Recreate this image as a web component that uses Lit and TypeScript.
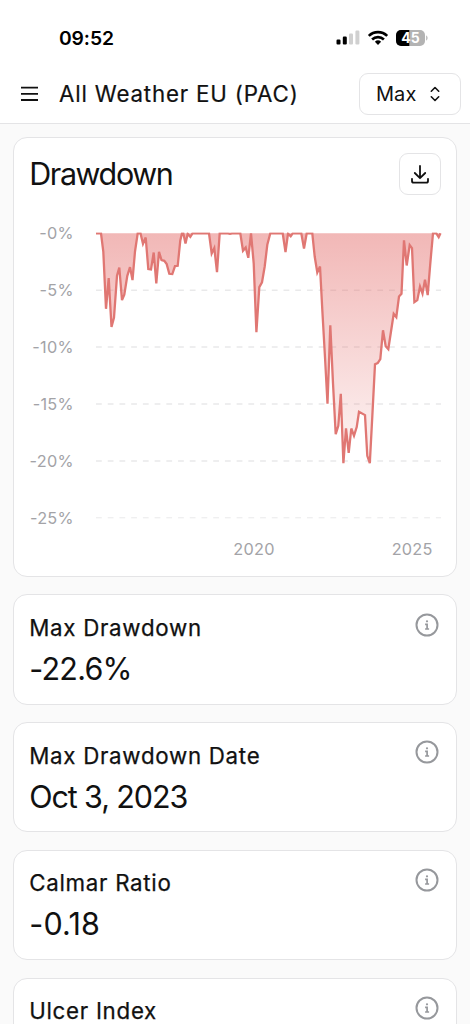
import { LitElement, html, css, svg, nothing } from 'lit';
import { customElement, property } from 'lit/decorators.js';

type Metric = {
  label: string;
  value: string;
  tracking: number;
};

const METRICS: Metric[] = [
  { label: 'Max Drawdown', value: '-22.6%', tracking: -0.75 },
  { label: 'Max Drawdown Date', value: 'Oct 3, 2023', tracking: -1.1 },
  { label: 'Calmar Ratio', value: '-0.18', tracking: 0.2 },
  { label: 'Ulcer Index', value: '-7.42', tracking: 0 },
];

// y grows downwards from the zero line, x from the start of the plot
const SERIES: [number, number][] = [
  [0, 0], [5, 0], [7.3, 18.2], [10, 75.5], [12.7, 44.8], [15.5, 93.6], [18, 84.2], [21, 42.5],
  [23.3, 34.2], [26, 66.8], [28.3, 61.5], [31.3, 42.5], [34, 33.8], [36.5, 46.8], [39, 18.2], [41.7, 0],
  [44.5, 0], [47, 10.5], [49.7, 4.2], [52.3, 35.8], [55, 36.2], [57.7, 19.2], [60.3, 50.2], [63, 18.5],
  [65.5, 26.8], [68.3, 27.5], [70.7, 30.8], [73.3, 40.5], [76.3, 40.8], [79, 32.8], [81.7, 32.5],
  [84.3, 7.2], [86, 0], [87.3, 0], [89.5, 10.2], [91.7, 0.5], [94.3, 3.5], [96.5, 0], [113, 0],
  [115.7, 20.2], [118.3, 14.8], [121, 38.8], [123.7, 0], [132, 0], [134, 0.6], [136, 0], [144.3, 0],
  [147, 17.5], [149.7, 14.2], [152.3, 24.5], [155, 0], [157.7, 30], [160.4, 98.8], [163.3, 53.8],
  [166, 49], [168.7, 33.2], [171.3, 11.5], [174.3, 0], [186.7, 0], [189.5, 18.8], [192, 0.3],
  [194.7, 3], [196.7, 0], [205.3, 0], [208, 15.2], [210.7, 0], [216.3, 0], [218.7, 23.2],
  [221.3, 39.2], [224, 33.2], [226.3, 76.5], [229, 124], [231.5, 170.5], [234.3, 92], [237, 150],
  [239.7, 200.8], [242.3, 192.5], [244.8, 160.5], [247.4, 229.8], [250, 195], [252.7, 219.5],
  [255.3, 195.2], [258, 202.5], [260.7, 193.8], [263, 178.5], [269, 181.8], [271.3, 222.5],
  [273.8, 229.8], [276.3, 183.2], [279, 131], [281.7, 129.8], [284.3, 125.8], [287, 97],
  [289.7, 113], [292.3, 115.8], [295, 98.2], [297.7, 80.5], [300.3, 83.8], [303, 63.2],
  [305.5, 60.5], [308, 7], [310.7, 32.2], [313.7, 11.8], [316, 14.8], [318.4, 68.8], [321.3, 66.8],
  [324, 53.2], [326.5, 60.2], [329, 46.5], [331.7, 61.8], [334.3, 30], [337, 0], [340.3, 0],
  [342.7, 3.8], [344.5, 0],
];

const STEP = 56.9;

@customElement('info-icon')
export class InfoIcon extends LitElement {
  static styles = css`
    :host {
      display: block;
      width: 24px;
      height: 24px;
    }

    svg {
      display: block;
    }
  `;

  render() {
    return html`
      <svg width="24" height="24" viewBox="0 0 24 24" fill="none" stroke="#96989c">
        <circle cx="12" cy="12" r="10.5" stroke-width="2" />
        <path d="M10.1 11.3h2v4.7M10.1 16h4" stroke-width="1.7" />
        <circle cx="12" cy="8.3" r="1.1" fill="#96989c" stroke="none" />
      </svg>
    `;
  }
}

@customElement('metric-card')
export class MetricCard extends LitElement {
  static styles = css`
    :host {
      box-sizing: border-box;
      display: flex;
      justify-content: space-between;
      align-items: flex-start;
      height: 110.3px;
      padding: 16.6px 17.2px 0 15px;
      border: 1px solid #e4e4e6;
      border-radius: 14px;
      background: #fff;
    }

    .label {
      font-size: 22.3px;
      line-height: 32px;
      -webkit-text-stroke: 0.25px #111;
      letter-spacing: 0.72px;
      white-space: nowrap;
    }

    .value {
      margin-top: 5px;
      font-size: 30.5px;
      line-height: 40px;
      white-space: nowrap;
    }

    info-icon {
      margin-top: 0.7px;
    }
  `;

  @property({ type: Object })
  metric!: Metric;

  render() {
    return html`
      <div>
        <div class="label">${this.metric.label}</div>
        <div class="value" style="letter-spacing: ${this.metric.tracking}px">${this.metric.value}</div>
      </div>
      <info-icon></info-icon>
    `;
  }
}

@customElement('drawdown-chart')
export class DrawdownChart extends LitElement {
  static styles = css`
    :host {
      display: block;
    }

    svg {
      display: block;
    }

    .grid {
      stroke: #e9e9ea;
      stroke-width: 1.5;
      stroke-dasharray: 5.8 5.92;
    }

    .grid.last {
      stroke-width: 1;
    }

    .tick {
      font-size: 16.3px;
      letter-spacing: 0.25px;
      fill: #a3a3a7;
    }

    .line {
      fill: none;
      stroke: #e07773;
      stroke-width: 2.3;
    }
  `;

  render() {
    const points = SERIES.map(([x, y]) => `${x},${y}`).join(' ');
    return html`
      <svg width="414" height="346" viewBox="-67 -14.3 414 346">
        <defs>
          <linearGradient id="fade" gradientUnits="userSpaceOnUse" x1="0" y1="0" x2="0" y2="230">
            <stop offset="0" stop-color="#e4706e" stop-opacity="0.5" />
            <stop offset="1" stop-color="#e4706e" stop-opacity="0.07" />
          </linearGradient>
          <clipPath id="plot"><rect x="0" y="-0.9" width="346" height="290" /></clipPath>
        </defs>
        ${[0, 1, 2, 3, 4, 5].map(i => svg`
          ${i > 0 ? svg`<line class="grid ${i === 5 ? 'last' : ''}" x1="0" x2="345" y1=${i * STEP} y2=${i * STEP} />` : nothing}
          <text class="tick" text-anchor="end" x="-22.3" y=${i * STEP + 5.9}>-${i * 5}%</text>
        `)}
        <g clip-path="url(#plot)">
          <polygon points=${points} fill="url(#fade)" />
          <polyline class="line" points=${points} />
        </g>
        <text class="tick" text-anchor="middle" x="158" y="322.2">2020</text>
        <text class="tick" text-anchor="middle" x="316.2" y="322.2">2025</text>
      </svg>
    `;
  }
}

@customElement('app-root')
export class AppRoot extends LitElement {
  static styles = css`
    :host {
      display: block;
      height: 1024px;
      overflow: hidden;
      background: #fafafa;
      color: #111;
      font-family: Inter, 'Liberation Sans', sans-serif;
    }

    .top {
      box-sizing: border-box;
      height: 124px;
      background: #fff;
      border-bottom: 1px solid #e4e4e6;
    }

    .status {
      display: flex;
      justify-content: space-between;
      align-items: center;
      height: 64px;
      padding: 12px 42px 0 59px;
      box-sizing: border-box;
    }

    .time {
      color: #000;
      font-size: 19.3px;
      font-weight: 600;
      letter-spacing: -0.1px;
    }

    .battery-text {
      font-size: 14px;
      font-weight: 700;
      fill: #fff;
    }

    .bar {
      display: flex;
      align-items: center;
      height: 60px;
      padding: 0 8.6px 0 20px;
    }

    .title {
      flex: 1;
      margin-left: 20px;
      padding-bottom: 2px;
      font-size: 22.3px;
      -webkit-text-stroke: 0.2px #111;
      letter-spacing: 0.82px;
      white-space: nowrap;
    }

    .select {
      box-sizing: border-box;
      display: flex;
      align-items: center;
      justify-content: space-between;
      width: 102.5px;
      height: 42px;
      padding: 0 20px 0 16px;
      border: 1px solid #e4e4e6;
      border-radius: 9px;
      font-size: 20px;
      letter-spacing: 0.1px;
    }

    .content {
      display: flex;
      flex-direction: column;
      gap: 17.4px;
      padding: 13.4px 13.2px 0;
    }

    .chart-card {
      box-sizing: border-box;
      height: 439.7px;
      padding: 15px 15px 0 15px;
      border: 1px solid #e4e4e6;
      border-radius: 14px;
      background: #fff;
    }

    .chart-head {
      display: flex;
      justify-content: space-between;
      align-items: center;
      height: 42px;
      margin-bottom: 24px;
    }

    .chart-title {
      font-size: 30.5px;
      line-height: 40px;
      letter-spacing: -1.4px;
    }

    .download {
      box-sizing: border-box;
      display: grid;
      place-items: center;
      width: 42px;
      height: 42px;
      border: 1px solid #e4e4e6;
      border-radius: 9px;
    }
  `;

  private renderStatus() {
    return html`
      <div class="status">
        <span class="time">09:52</span>
        <svg width="92" height="18" viewBox="0 -1 92 18">
          <rect x="0.5" y="9.6" width="4" height="5" rx="1.1" />
          <rect x="6.8" y="6.6" width="4" height="8" rx="1.1" />
          <rect x="13" y="3.6" width="4" height="11" rx="1.1" fill="#d0d0d0" />
          <rect x="19.4" y="0.6" width="4" height="14" rx="1.1" fill="#d0d0d0" />
          <g fill="none" stroke="#000" stroke-width="2.6">
            <path d="M32.8 5.9a13.2 13.2 0 0 1 18.4 0" />
            <path d="M36.1 9.5a8.4 8.4 0 0 1 11.8 0" />
          </g>
          <path d="M38.9 11.8a4.5 4.5 0 0 1 6.2 0L42 15z" />
          <clipPath id="cell"><rect x="60" y="0" width="29" height="16" rx="5" /></clipPath>
          <g clip-path="url(#cell)">
            <rect x="60" y="0" width="29" height="16" fill="#b3b3b3" />
            <rect x="60" y="0" width="13.3" height="16" />
          </g>
          <path d="M90.2 5.5c1.8.6 1.8 4.4 0 5z" fill="#b3b3b3" />
          <text class="battery-text" x="74.5" y="13.1" text-anchor="middle">45</text>
        </svg>
      </div>
    `;
  }

  render() {
    return html`
      <header class="top">
        ${this.renderStatus()}
        <div class="bar">
          <svg width="19" height="16" viewBox="0 0 19 16" stroke="#111" stroke-width="1.8">
            <path d="M1 1.6h17M1 7.8h17M1 14h17" />
          </svg>
          <div class="title">All Weather EU (PAC)</div>
          <div class="select">
            <span>Max</span>
            <svg width="10" height="16" viewBox="0 0 10 16" fill="none" stroke="#111" stroke-width="1.6" stroke-linecap="round" stroke-linejoin="round">
              <path d="M1.3 5.2 5 1.5l3.7 3.7M1.3 10.8 5 14.5l3.7-3.7" />
            </svg>
          </div>
        </div>
      </header>
      <main class="content">
        <section class="chart-card">
          <div class="chart-head">
            <div class="chart-title">Drawdown</div>
            <div class="download">
              <svg width="18" height="19" viewBox="0 0 18 19" fill="none" stroke="#111" stroke-width="1.8" stroke-linecap="round" stroke-linejoin="round">
                <path d="M9 1v12M3.8 8 9 13.2 14.2 8M1 13.8v2.2q0 1.7 1.7 1.7h12.6q1.7 0 1.7-1.7v-2.2" />
              </svg>
            </div>
          </div>
          <drawdown-chart></drawdown-chart>
        </section>
        ${METRICS.map(metric => html`<metric-card .metric=${metric}></metric-card>`)}
      </main>
    `;
  }
}
